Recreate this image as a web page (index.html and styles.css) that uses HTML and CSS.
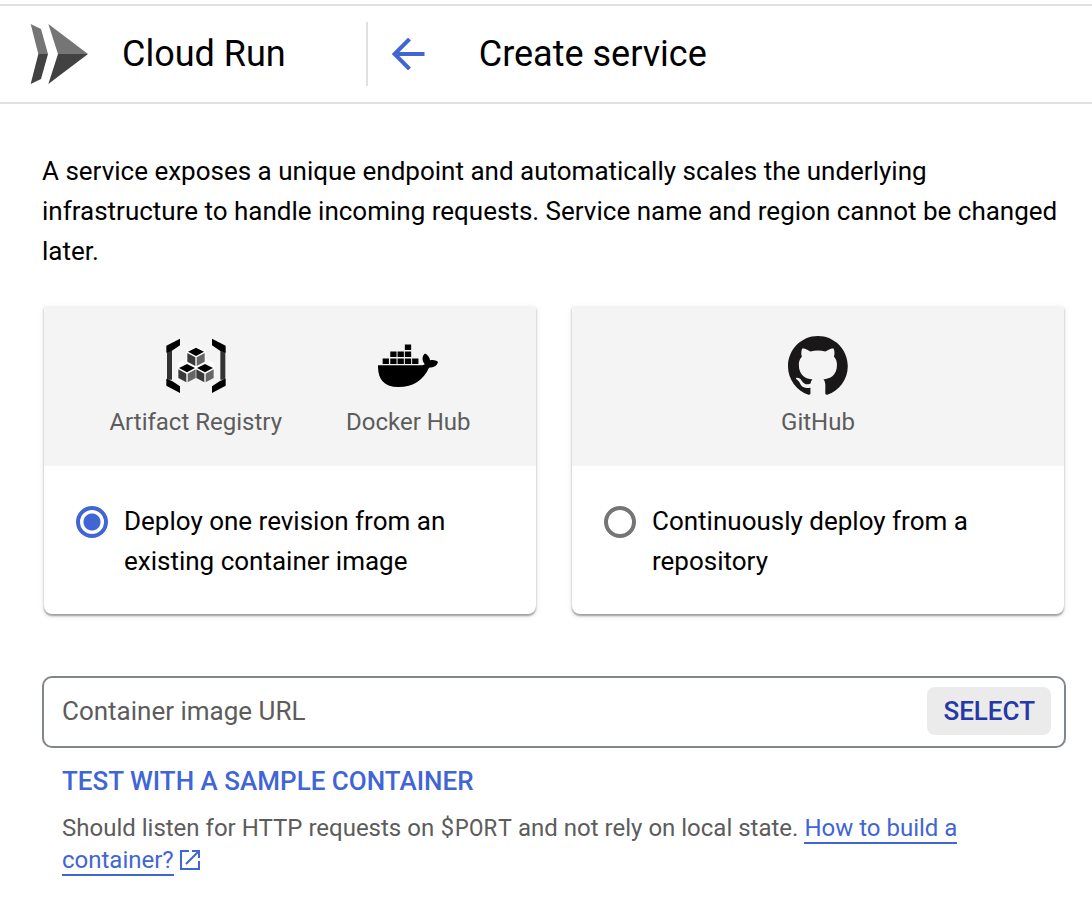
FILE: index.html
```html
<!DOCTYPE html>
<html lang="en">
<head>
<meta charset="utf-8">
<meta name="viewport" content="width=device-width, initial-scale=1">
<title>Create service – Cloud Run</title>
<link rel="stylesheet" href="styles.css">
</head>
<body>
<header class="topbar">
  <div class="product">
    <svg class="product-logo" viewBox="90 72 174 180" aria-hidden="true">
      <path fill="#757575" d="M92 72l31 15 21 75h-29zM145 72l119 90h-90z"/>
      <path fill="#424242" d="M92 252l31-15 21-75h-29zM145 252l119-90h-90z"/>
    </svg>
    <span class="product-name">Cloud Run</span>
  </div>
  <button class="back" type="button" aria-label="Back">
    <svg viewBox="0 0 32 32" aria-hidden="true"><path d="M32 16H3M17 1L2 16l15 15" fill="none" stroke="currentColor" stroke-width="4"/></svg>
  </button>
  <h1 class="page-title">Create service</h1>
</header>

<main class="content">
  <p class="intro">A service exposes a unique endpoint and automatically scales the underlying infrastructure to handle incoming requests. Service name and region cannot be changed later.</p>

  <form>
    <div class="cards">
      <label class="card">
        <span class="sources">
          <span class="source">
            <svg class="source-icon" viewBox="48 33 180 180" aria-hidden="true">
              <path fill="#333" d="M51 78h15v86H51zM211 78h15v86h-15z"/>
              <path fill="#000" d="M49 62l41-21v20L66 77l-17 6zM227 62l-41-21v20l24 16 17 6zM49 182l41 22v-20l-24-16-17-7zM227 182l-41 22v-20l24-16 17-7z"/>
              <path fill="#fff" d="M138 64l29 15v22l27 15v36l-29 16-27-15-27 15-29-16v-36l27-15V79z"/>
              <g id="cube">
                <path fill="#000" d="M138 68l24 12-24 13-24-13z"/>
                <path fill="#3a3a3a" d="M112 84l24 13v26l-24-13z"/>
                <path fill="#666" d="M164 84l-24 13v26l24-13z"/>
              </g>
              <use href="#cube" x="-27" y="49"/>
              <use href="#cube" x="27" y="49"/>
            </svg>
            <span>Artifact Registry</span>
          </span>
          <span class="source">
            <svg class="source-icon" viewBox="38 18 181 180" aria-hidden="true">
              <path d="M38 106h130c5 0 8-1 11-3-9-12-9-25 1-33 9 5 14 12 15 21 10-2 18 0 24 5-3 11-12 17-27 17-18 38-46 58-93 58-44 0-62-25-61-65z"/>
              <path d="M52 85h19v17H52zM75 85h19v17H75zM97 85h19v17H97zM119 85h19v17h-19zM141 85h19v17h-19zM75 64h19v17H75zM97 64h19v17H97zM119 64h19v17h-19zM119 43h19v17h-19z"/>
            </svg>
            <span>Docker Hub</span>
          </span>
        </span>
        <span class="choice">
          <input class="radio" type="radio" name="source" checked>
          <span>Deploy one revision from an existing container image</span>
        </span>
      </label>

      <label class="card">
        <span class="sources">
          <span class="source">
            <svg class="source-icon" viewBox="0 0 98 98" aria-hidden="true">
              <path fill="#191717" fill-rule="evenodd" d="M48.854 0C21.839 0 0 22 0 49.217c0 21.756 13.993 40.172 33.405 46.69 2.427.49 3.316-1.059 3.316-2.362 0-1.141-.08-5.052-.08-9.127-13.59 2.934-16.42-5.867-16.42-5.867-2.184-5.704-5.42-7.17-5.42-7.17-4.448-3.015.324-3.015.324-3.015 4.934.326 7.523 5.052 7.523 5.052 4.367 7.496 11.404 5.378 14.235 4.074.404-3.178 1.699-5.378 3.074-6.6-10.839-1.141-22.243-5.378-22.243-24.283 0-5.378 1.94-9.778 5.014-13.2-.485-1.222-2.184-6.275.486-13.038 0 0 4.125-1.304 13.426 5.052a46.97 46.97 0 0 1 12.214-1.63c4.125 0 8.33.571 12.213 1.63 9.302-6.356 13.427-5.052 13.427-5.052 2.67 6.763.97 11.816.485 13.038 3.155 3.422 5.015 7.822 5.015 13.2 0 18.905-11.404 23.06-22.324 24.283 1.78 1.548 3.316 4.481 3.316 9.126 0 6.6-.08 11.897-.08 13.526 0 1.304.89 2.853 3.316 2.364 19.412-6.52 33.405-24.935 33.405-46.691C97.707 22 75.788 0 48.854 0z"/>
            </svg>
            <span>GitHub</span>
          </span>
        </span>
        <span class="choice">
          <input class="radio" type="radio" name="source">
          <span>Continuously deploy from a repository</span>
        </span>
      </label>
    </div>

    <div class="field">
      <input class="field-input" type="text" placeholder="Container image URL" aria-label="Container image URL">
      <button class="select-button" type="button">SELECT</button>
    </div>

    <div class="hints">
      <button class="sample-button" type="button">TEST WITH A SAMPLE CONTAINER</button>
      <p class="help">Should listen for HTTP requests on <code>$PORT</code> and not rely on local state. <a class="help-link" href="#build">How to build a container?</a> <svg class="external" viewBox="0 0 20 20" aria-hidden="true"><path d="M9 1H1v18h18v-8M12 1h7v7M19 1L6 14" fill="none" stroke="currentColor" stroke-width="2"/></svg></p>
    </div>
  </form>
</main>
</body>
</html>
```
FILE: styles.css
```css
* {
  box-sizing: border-box;
}

body {
  margin: 0;
  padding-top: 4px;
  background: #fff;
  color: #000;
  font: 26px/40px Roboto, sans-serif;
}

button,
input {
  font: inherit;
}

button {
  border: 0;
  background: none;
  padding: 0;
  cursor: pointer;
}

.topbar {
  display: flex;
  align-items: center;
  height: 100px;
  border-top: 2px solid #e0e0e0;
  border-bottom: 2px solid #e0e0e0;
  font-size: 36px;
}

.product {
  display: flex;
  align-items: center;
  gap: 34px;
  height: 64px;
  padding: 0 80px 0 30px;
  border-right: 2px solid #e0e0e0;
}

.product-logo {
  width: 58px;
  height: 60px;
}

.back {
  display: flex;
  margin: 0 54px 0 24px;
  color: #3f66d4;
}

.back svg {
  width: 33px;
  height: 32px;
}

.page-title {
  margin: 0;
  font-size: inherit;
  font-weight: 400;
}

.content {
  padding: 47px 26px 32px 42px;
}

.intro {
  margin: 0 0 35px;
}

.cards {
  display: grid;
  grid-template-columns: 1fr 1fr;
  gap: 36px;
  margin: 0 2px;
}

.card {
  border-radius: 2px 2px 8px 8px;
  box-shadow: 0 2px 2px rgba(0, 0, 0, 0.34), 0 2px 6px rgba(0, 0, 0, 0.1);
  overflow: hidden;
  cursor: pointer;
}

.sources {
  display: flex;
  justify-content: center;
  gap: 64px;
  padding: 30px 16px 28px;
  background: #f4f4f4;
  color: #5c5c5c;
  font-size: 24px;
  line-height: 32px;
}

.source {
  display: flex;
  flex-direction: column;
  align-items: center;
  gap: 10px;
}

.source-icon {
  width: 60px;
  height: 60px;
}

.choice {
  display: flex;
  gap: 16px;
  padding: 35px 64px 33px 32px;
}

.radio {
  appearance: none;
  flex: none;
  width: 32px;
  height: 32px;
  margin: 5px 0 0;
  border: 4px solid #757575;
  border-radius: 50%;
}

.radio:checked {
  border-color: #3f66d4;
  background: radial-gradient(circle, #3f66d4 8px, transparent 9px);
}

.field {
  display: flex;
  align-items: center;
  height: 72px;
  margin-top: 62px;
  padding: 0 13px 2px 18px;
  border: 2px solid #80868b;
  border-radius: 10px;
}

.field-input {
  flex: 1;
  min-width: 0;
  padding: 0;
  border: 0;
  outline: 0;
  background: none;
}

.field-input::placeholder {
  color: #5c5c5c;
  opacity: 1;
}

.select-button {
  height: 48px;
  padding: 0 16px;
  border-radius: 8px;
  background: #ebebeb;
  color: #2438a6;
  font-weight: 500;
}

.hints {
  padding: 13px 20px 0;
}

.sample-button {
  display: block;
  color: #3f66d4;
  font-weight: 500;
}

.help {
  margin: 11px 0 0;
  color: #5c5c5c;
  font-size: 24px;
  line-height: 32px;
}

.help code {
  font-family: "Roboto Mono", "Liberation Mono", monospace;
  font-size: 24px;
  line-height: 1;
}

.help-link {
  border-bottom: 2px solid #3f66d4;
  color: #3f66d4;
  text-decoration: none;
}

.external {
  width: 20px;
  height: 20px;
  color: #3f66d4;
  vertical-align: -2px;
}
```
